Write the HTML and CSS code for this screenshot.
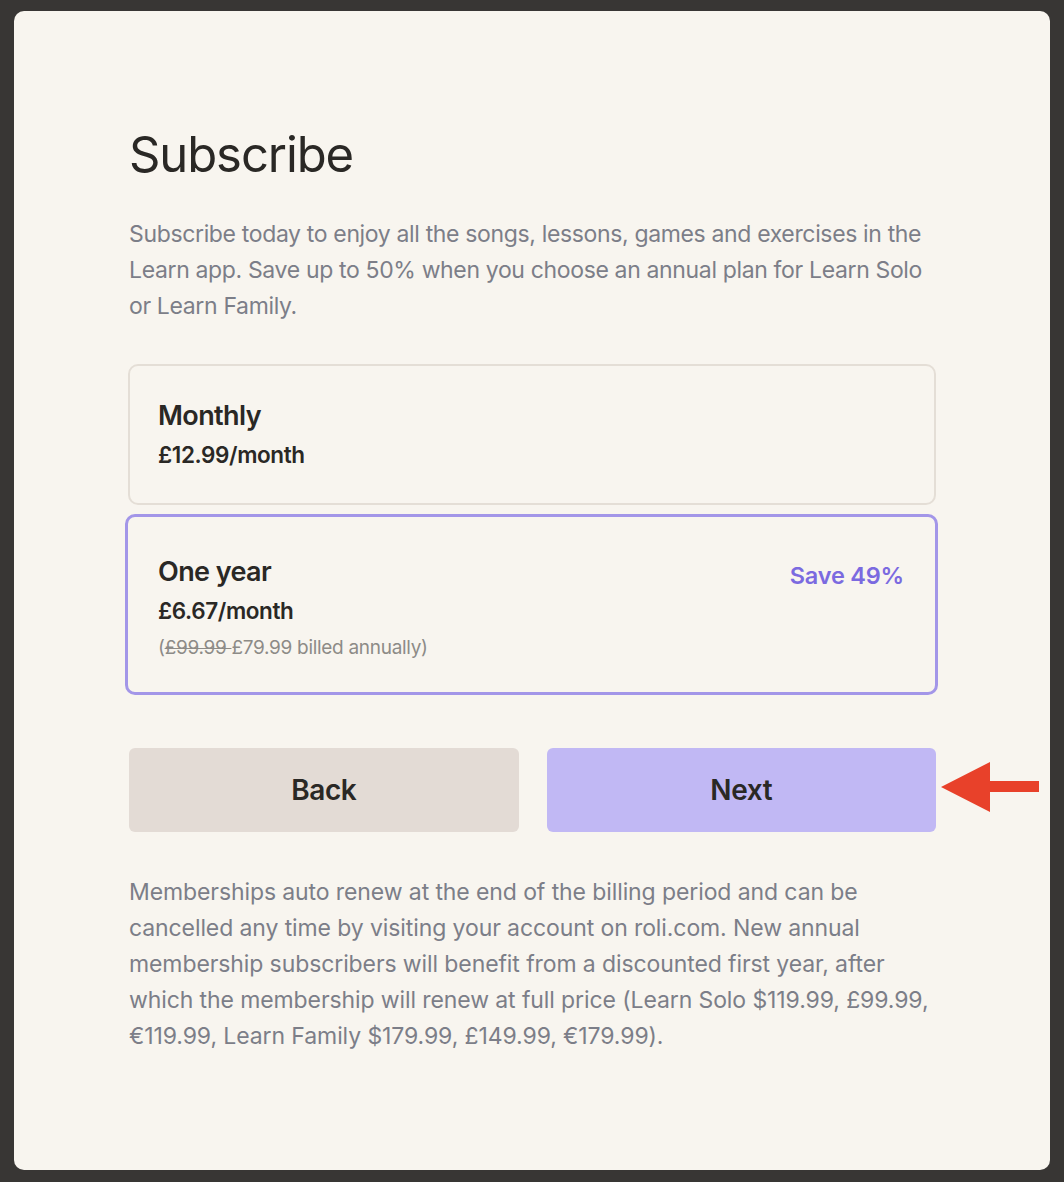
FILE: index.html
```html
<!DOCTYPE html>
<html lang="en">
<head>
<meta charset="utf-8">
<title>Subscribe</title>
<link rel="stylesheet" href="styles.css">
</head>
<body>
<main class="panel">
  <h1 class="title">Subscribe</h1>
  <p class="intro">Subscribe today to enjoy all the songs, lessons, games and exercises in the Learn app. Save up to 50% when you choose an annual plan for Learn Solo or Learn Family.</p>

  <div class="plans">
    <div class="plan">
      <div class="plan-main">
        <div class="plan-name">Monthly</div>
        <div class="plan-price">£12.99/month</div>
      </div>
    </div>
    <div class="plan plan-selected">
      <div class="plan-main">
        <div class="plan-name">One year</div>
        <div class="plan-price">£6.67/month</div>
        <div class="plan-note">(<s>£99.99 </s>£79.99 billed annually)</div>
      </div>
      <div class="plan-save">Save 49%</div>
    </div>
  </div>

  <div class="actions">
    <button class="btn btn-back">Back</button>
    <div class="next-wrap">
      <button class="btn btn-next">Next</button>
      <svg class="pointer" width="100" height="52" viewBox="0 0 100 52" aria-hidden="true">
        <path d="M0 26 L49 1 L49 20 L98 20 L98 31 L49 31 L49 51 Z" fill="#e8412a"/>
      </svg>
    </div>
  </div>

  <p class="terms">Memberships auto renew at the end of the billing period and can be cancelled any time by visiting your account on roli.com. New annual membership subscribers will benefit from a discounted first year, after which the membership will renew at full price (Learn Solo $119.99, £99.99, €119.99, Learn Family $179.99, £149.99, €179.99).</p>
</main>
</body>
</html>
```
FILE: styles.css
```css
html, body {
  margin: 0;
  padding: 0;
}
body {
  background: #383634;
  padding: 11px 14px 12px 14px;
  font-family: "Inter", "Liberation Sans", sans-serif;
  color: #2a2825;
}
.panel {
  background: #f8f5ef;
  border-radius: 10px;
  height: 1159px;
  box-sizing: border-box;
  padding: 114px 114px 0 115px;
}
.title {
  margin: 0;
  font-size: 49px;
  font-weight: 400;
  line-height: 60px;
  color: #2a2825;
  letter-spacing: -1.1px;
}
.intro {
  margin: 31px 0 0 0;
  font-size: 23px;
  line-height: 36px;
  color: #7c7e88;
  letter-spacing: -0.35px;
}
.plans {
  margin-top: 40px;
  margin-left: -1px;
  display: flex;
  flex-direction: column;
  gap: 10px;
}
.plan {
  display: flex;
  justify-content: space-between;
  align-items: flex-start;
  border: 2px solid #e4ded6;
  border-radius: 10px;
  padding: 32px 28px 30px 28px;
}
.plan-selected {
  border: 3px solid #a396e8;
  margin: -1px -2px -1px -3px;
  padding: 37px 31px 26px 30px;
}
.plan-main {
  display: flex;
  flex-direction: column;
}
.plan-name {
  font-size: 27px;
  font-weight: 600;
  line-height: 36px;
  color: #2a2825;
  letter-spacing: -0.6px;
}
.plan-price {
  margin-top: 3px;
  font-size: 22.5px;
  font-weight: 600;
  line-height: 36px;
  color: #2a2825;
  letter-spacing: -0.4px;
}
.plan-note {
  margin-top: 1px;
  font-size: 19px;
  line-height: 36px;
  color: #8d8b87;
  letter-spacing: -0.3px;
}
.plan-note s {
  text-decoration-thickness: 1px;
}
.plan-save {
  margin-top: 4px;
  font-size: 23.5px;
  font-weight: 600;
  line-height: 36px;
  color: #7b6ae0;
  letter-spacing: -0.2px;
}
.actions {
  margin-top: 54px;
  display: grid;
  grid-template-columns: 1fr 1fr;
  gap: 28px;
}
.btn {
  height: 84px;
  border: none;
  border-radius: 6px;
  font-family: inherit;
  font-size: 28px;
  font-weight: 600;
  color: #2a2825;
  width: 100%;
  letter-spacing: -0.4px;
}
.btn-back {
  background: #e3dbd5;
}
.next-wrap {
  position: relative;
}
.btn-next {
  background: #c1b8f4;
}
.pointer {
  position: absolute;
  left: 394px;
  top: 13px;
}
.terms {
  margin: 42px 0 0 0;
  font-size: 23px;
  line-height: 36px;
  color: #7c7e88;
  letter-spacing: -0.1px;
}
```
